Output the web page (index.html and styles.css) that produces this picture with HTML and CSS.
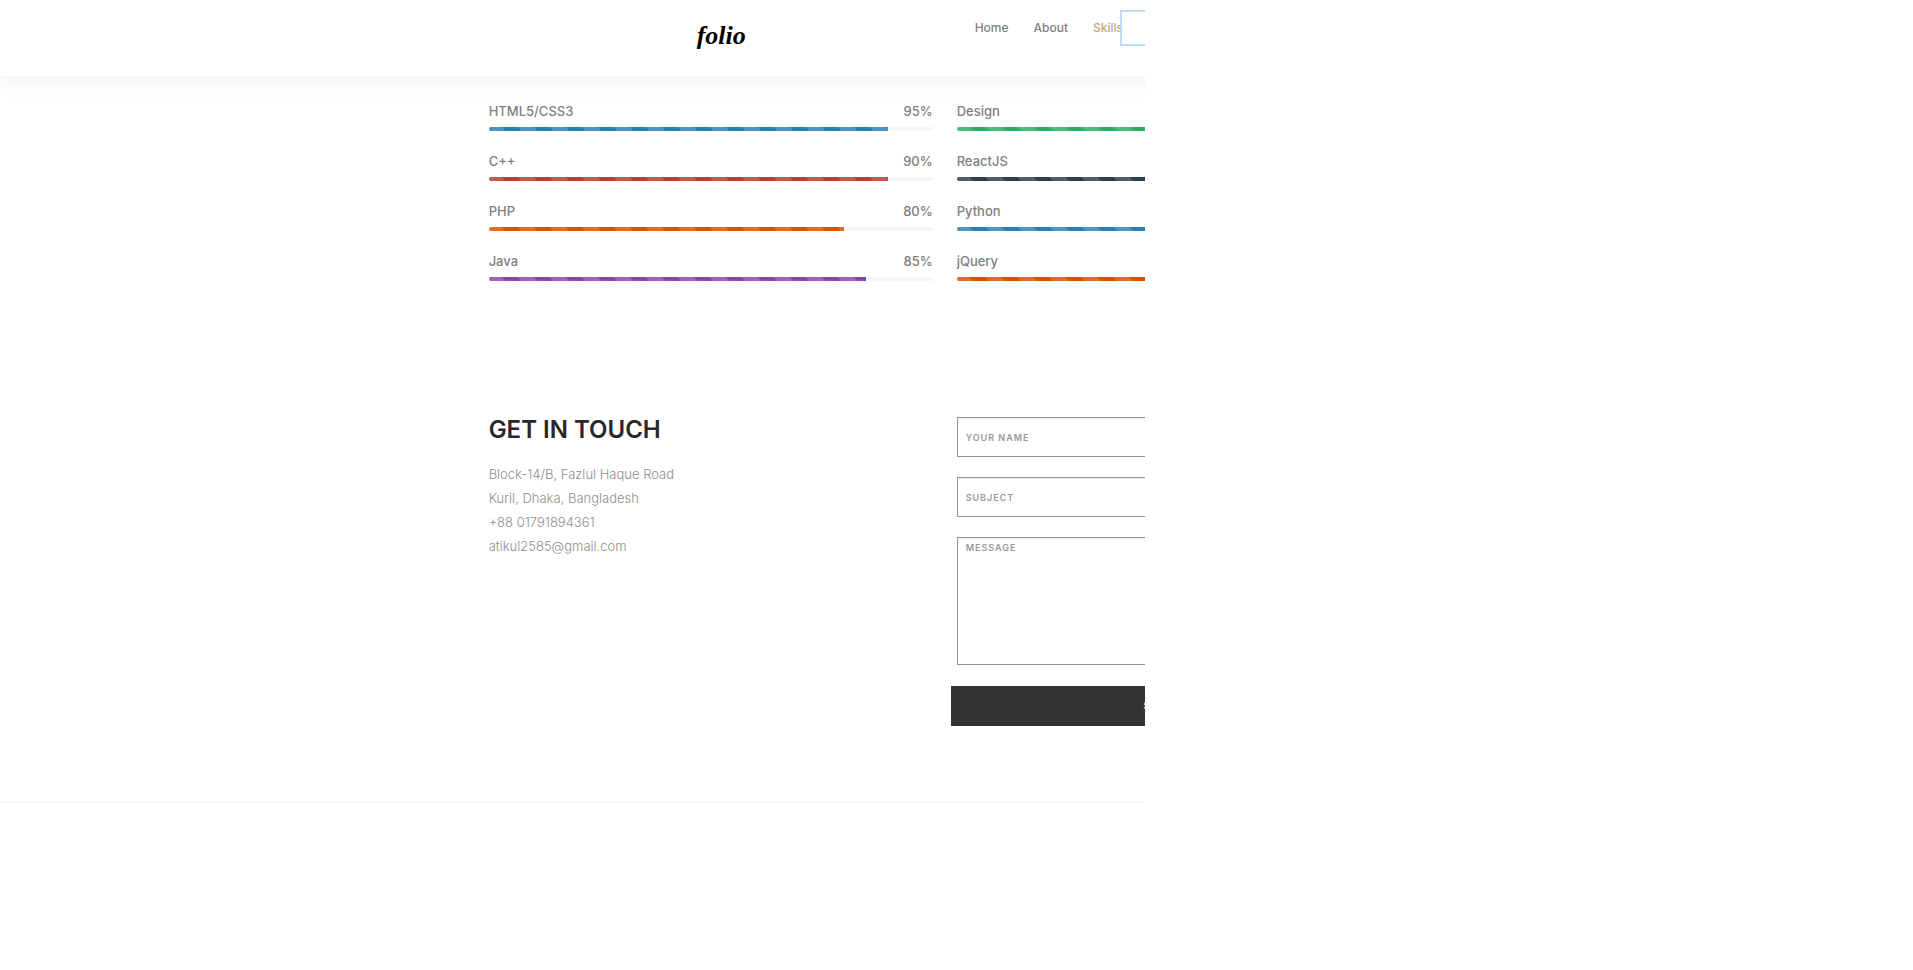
FILE: index.html
```html
<!DOCTYPE html>
<html lang="en">
<head>
<meta charset="utf-8">
<title>folio</title>
<link rel="stylesheet" href="styles.css">
</head>
<body>
<div class="viewport">
<div class="page">
  <header class="header">
    <div class="container columns">
      <a class="logo" href="#home">folio</a>
      <nav class="nav">
        <a href="#home">Home</a>
        <a href="#about">About</a>
        <a class="active" href="#skills">Skills<span class="focus-box"></span></a>
      </nav>
    </div>
  </header>
  <main>
    <section class="container columns skills" id="skills">
      <div class="skill"><div class="label"><span>HTML5/CSS3</span><span>95%</span></div><div class="track"><div class="bar blue" style="width:90%"></div></div></div>
      <div class="skill"><div class="label"><span>Design</span></div><div class="track"><div class="bar green" style="width:90%"></div></div></div>
      <div class="skill"><div class="label"><span>C++</span><span>90%</span></div><div class="track"><div class="bar red" style="width:90%"></div></div></div>
      <div class="skill"><div class="label"><span>ReactJS</span></div><div class="track"><div class="bar navy" style="width:90%"></div></div></div>
      <div class="skill"><div class="label"><span>PHP</span><span>80%</span></div><div class="track"><div class="bar orange" style="width:80%"></div></div></div>
      <div class="skill"><div class="label"><span>Python</span></div><div class="track"><div class="bar blue" style="width:80%"></div></div></div>
      <div class="skill"><div class="label"><span>Java</span><span>85%</span></div><div class="track"><div class="bar purple" style="width:85%"></div></div></div>
      <div class="skill"><div class="label"><span>jQuery</span></div><div class="track"><div class="bar orange" style="width:85%"></div></div></div>
    </section>
    <section class="container columns contact" id="contact">
      <div>
        <h2>GET IN TOUCH</h2>
        <address>Block-14/B, Fazlul Haque Road<br>Kuril, Dhaka, Bangladesh<br>+88 01791894361<br>atikul2585@gmail.com</address>
      </div>
      <form class="form">
        <input type="text" aria-label="Your name" placeholder="YOUR NAME">
        <input type="text" aria-label="Subject" placeholder="SUBJECT">
        <textarea aria-label="Message" placeholder="MESSAGE"></textarea>
        <button type="button">SUBMIT NOW</button>
      </form>
    </section>
  </main>
  <footer class="footer"></footer>
</div>
</div>
</body>
</html>
```
FILE: styles.css
```css
* { box-sizing: border-box; }
body {
  margin: 0;
  display: grid;
  grid-template-columns: 1145fr 768fr;
  background: #fff;
  color: #808080;
  font-family: Inter, "Open Sans", sans-serif;
  font-size: 13px;
}
.viewport { min-width: 0; overflow: hidden; }
.page { width: 165%; }
.container { max-width: 912px; margin: 0 auto; }
.columns { display: grid; grid-template-columns: 1fr 1fr; column-gap: 24px; }

.header {
  height: 76px;
  background: #fff;
  box-shadow: 0 8px 20px rgba(0, 0, 0, 0.05);
}
.logo {
  padding: 12px 0 0 208px;
  color: #000;
  font: italic bold 26px/48px "Liberation Serif", serif;
  text-decoration: none;
}
.nav { display: flex; gap: 25px; padding: 16px 0 0 18px; }
.nav a {
  position: relative;
  height: 24px;
  color: #808080;
  font-size: 12px;
  font-weight: 500;
  line-height: 24px;
  text-decoration: none;
}
.nav .active { color: #bfa580; }
.focus-box {
  position: absolute;
  left: 100%;
  top: -6px;
  width: 64px;
  height: 36px;
  margin-left: -3px;
  border: 2px solid #c2dbfb;
}

.skills { padding-top: 25px; row-gap: 20px; }
.label {
  display: flex;
  justify-content: space-between;
  height: 26px;
  font-weight: 500;
  line-height: 20px;
}
.track { height: 4px; border-radius: 2px; background: #f5f5f5; overflow: hidden; }
.bar {
  height: 100%;
  background-image: linear-gradient(45deg, rgba(255,255,255,.16) 25%, transparent 25%, transparent 50%, rgba(255,255,255,.16) 50%, rgba(255,255,255,.16) 75%, transparent 75%);
  background-size: 32px 32px;
  background-position: -4px 0;
}
.blue { background-color: #2980b9; }
.green { background-color: #27ae60; }
.red { background-color: #c0392b; }
.navy { background-color: #2f3b4f; }
.orange { background-color: #d35400; }
.purple { background-color: #8e44ad; }

.contact { padding-top: 136px; }
h2 { margin: 0 0 19px; color: #282828; font-size: 24px; font-weight: 600; line-height: 26px; }
address { color: #8e8e8e; font-style: normal; font-weight: 300; line-height: 24px; }
.form { display: flex; flex-direction: column; }
.form input, .form textarea {
  height: 40px;
  margin: 0 0 20px;
  padding: 0 8px;
  border: 1px solid #959595;
  border-radius: 0;
  background: #fff;
  box-shadow: inset 0 1px 1px rgba(0, 0, 0, 0.08);
  font: 600 9px/20px Inter, "Open Sans", sans-serif;
  letter-spacing: 1px;
  resize: none;
}
.form textarea { height: 128px; }
.form ::placeholder { color: #999; opacity: 1; }
.form button {
  height: 40px;
  margin: 1px -6px 0;
  border: 0;
  background: #333;
  color: #fff;
  font: 600 9px/20px Inter, "Open Sans", sans-serif;
  letter-spacing: 1px;
}
.footer { margin-top: 76px; border-top: 1px solid #f3f3f3; }
```
